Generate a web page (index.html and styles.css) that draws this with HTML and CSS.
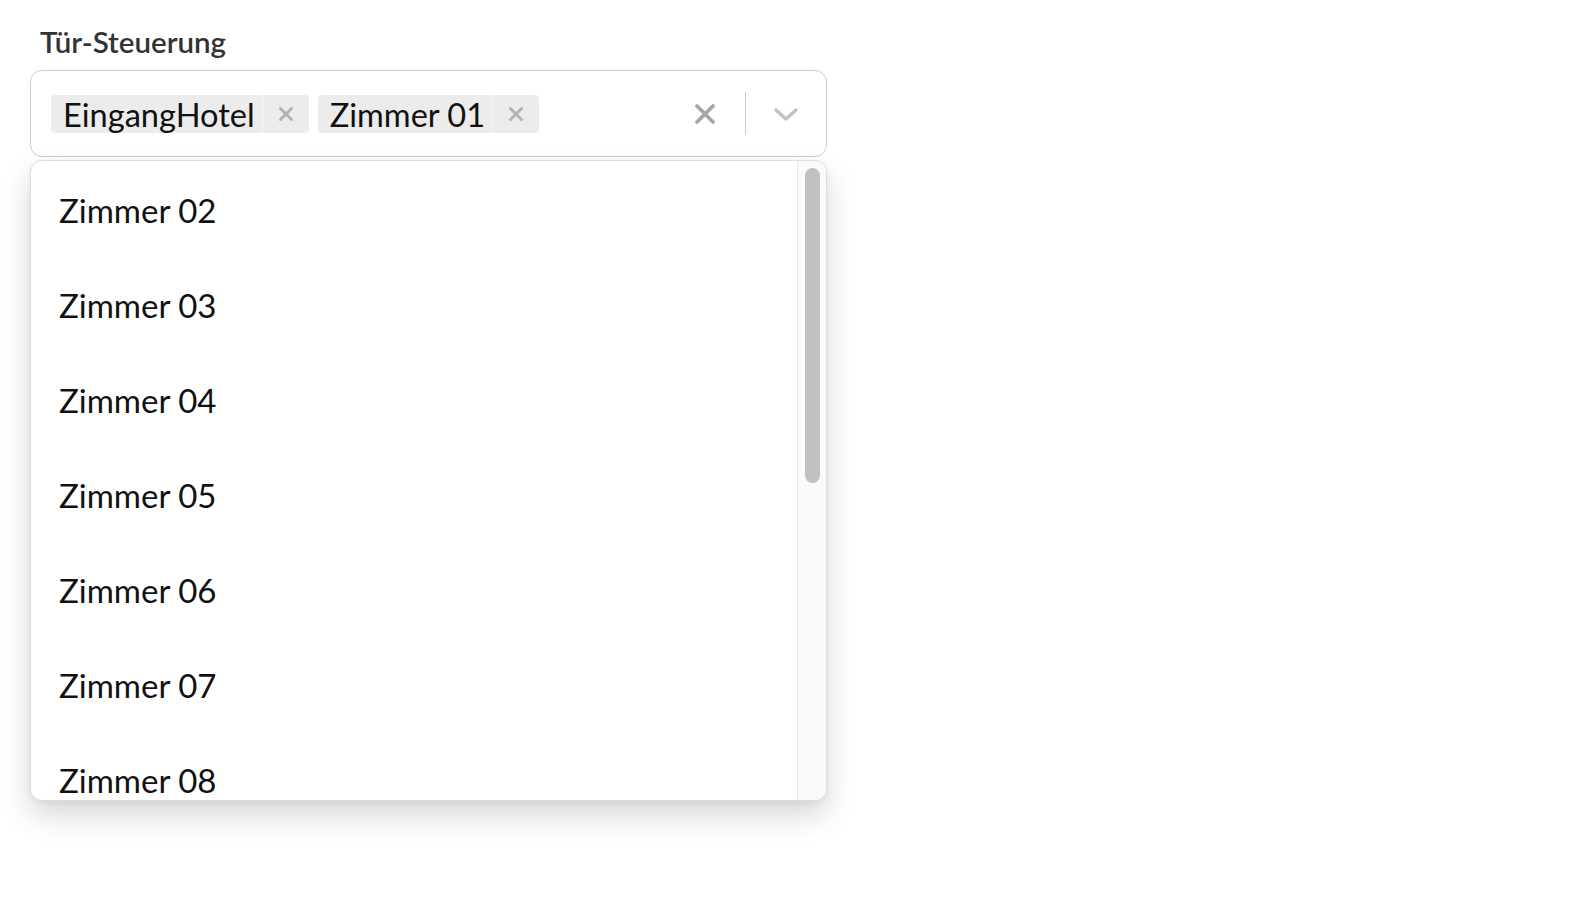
FILE: index.html
```html
<!DOCTYPE html>
<html lang="de">
<head>
    <meta charset="UTF-8">
    <meta name="viewport" content="width=device-width, initial-scale=1.0">
    <title>Tür-Steuerung</title>
    <link rel="stylesheet" href="styles.css">
</head>
<body>
    <div class="field">
        <label class="field-label">Tür-Steuerung</label>

        <div class="select-control">
            <div class="value-list">
                <div class="tag">
                    <span class="tag-label">EingangHotel</span>
                    <span class="tag-remove">
                        <svg width="18" height="18" viewBox="0 0 18 18"><path d="M3.5 3.5 L14.5 14.5 M14.5 3.5 L3.5 14.5" stroke="currentColor" stroke-width="3" stroke-linecap="round"/></svg>
                    </span>
                </div>
                <div class="tag">
                    <span class="tag-label">Zimmer 01</span>
                    <span class="tag-remove">
                        <svg width="18" height="18" viewBox="0 0 18 18"><path d="M3.5 3.5 L14.5 14.5 M14.5 3.5 L3.5 14.5" stroke="currentColor" stroke-width="3" stroke-linecap="round"/></svg>
                    </span>
                </div>
            </div>
            <div class="indicators">
                <span class="indicator clear">
                    <svg width="22" height="22" viewBox="0 0 22 22"><path d="M3 3 L19 19 M19 3 L3 19" stroke="currentColor" stroke-width="3.8" stroke-linecap="round"/></svg>
                </span>
                <span class="separator"></span>
                <span class="indicator chevron">
                    <svg width="26" height="16" viewBox="0 0 26 16"><path d="M3 4 L13 13 L23 4" fill="none" stroke="currentColor" stroke-width="3.4" stroke-linecap="round" stroke-linejoin="round"/></svg>
                </span>
            </div>
        </div>

        <div class="menu">
            <ul class="menu-list" id="options"></ul>
            <div class="scroll-track">
                <div class="scroll-thumb"></div>
            </div>
        </div>
    </div>

    <script>
        const options = document.getElementById('options');
        for (let i = 2; i <= 8; i++) {
            const item = document.createElement('li');
            item.className = 'option';
            item.textContent = 'Zimmer ' + String(i).padStart(2, '0');
            options.appendChild(item);
        }
    </script>
</body>
</html>
```

FILE: styles.css
```css
:root {
    --text: #111111;
    --label: #333333;
    --border: #cccccc;
    --tag-bg: #ececec;
    --icon: #a6a6a6;
}

html, body {
    height: 100%;
}

body {
    font-family: Lato, 'Open Sans', sans-serif;
    margin: 0;
    padding: 0;
    background-color: #ffffff;
    color: var(--text);
}

.field {
    width: 797px;
    padding: 24px 0 60px 30px;
}

.field-label {
    display: block;
    font-size: 29.5px;
    font-weight: 600;
    color: var(--label);
    padding-left: 10px;
    margin-bottom: 10px;
    line-height: 36px;
}

.select-control {
    display: flex;
    align-items: center;
    box-sizing: border-box;
    height: 87px;
    border: 1.5px solid var(--border);
    border-radius: 12px;
    padding: 0 0 0 20px;
}

.value-list {
    flex: 1;
    display: flex;
    gap: 9px;
}

.tag {
    display: flex;
    background-color: var(--tag-bg);
    border-radius: 4px;
    height: 38px;
    margin-top: 1px;
    overflow: hidden;
}

.tag-label {
    font-size: 32.6px;
    line-height: 36px;
    padding: 2px 7px 0 12px;
}

.tag-remove {
    display: flex;
    align-items: center;
    justify-content: center;
    width: 46px;
    color: #b3b3b3;
    border-left: 1px solid #f6f6f6;
}

.indicators {
    display: flex;
    align-items: center;
    height: 100%;
}

.indicator {
    display: flex;
    align-items: center;
    justify-content: center;
    width: 80px;
}

.clear {
    color: var(--icon);
}

.chevron {
    color: #c2c2c2;
}

.separator {
    width: 1.5px;
    height: 43px;
    background-color: var(--border);
}

.menu {
    display: flex;
    height: 641px;
    margin-top: 3px;
    box-sizing: border-box;
    border: 1.5px solid #dddddd;
    border-radius: 12px;
    background-color: #ffffff;
    box-shadow: 0 14px 30px rgba(0, 0, 0, 0.16), 0 2px 6px rgba(0, 0, 0, 0.05);
    overflow: hidden;
}

.menu-list {
    flex: 1;
    list-style-type: none;
    margin: 0;
    padding: 0;
    overflow: hidden;
}

.option {
    font-size: 33px;
    line-height: 40px;
    padding: 29px 28px 26px;
}

.scroll-track {
    width: 29px;
    background-color: #fafafa;
    border-left: 1px solid #e6e6e6;
    padding: 7px 6px 0 7px;
    box-sizing: border-box;
}

.scroll-thumb {
    height: 315px;
    border-radius: 8px;
    background-color: #c1c1c1;
}
```
